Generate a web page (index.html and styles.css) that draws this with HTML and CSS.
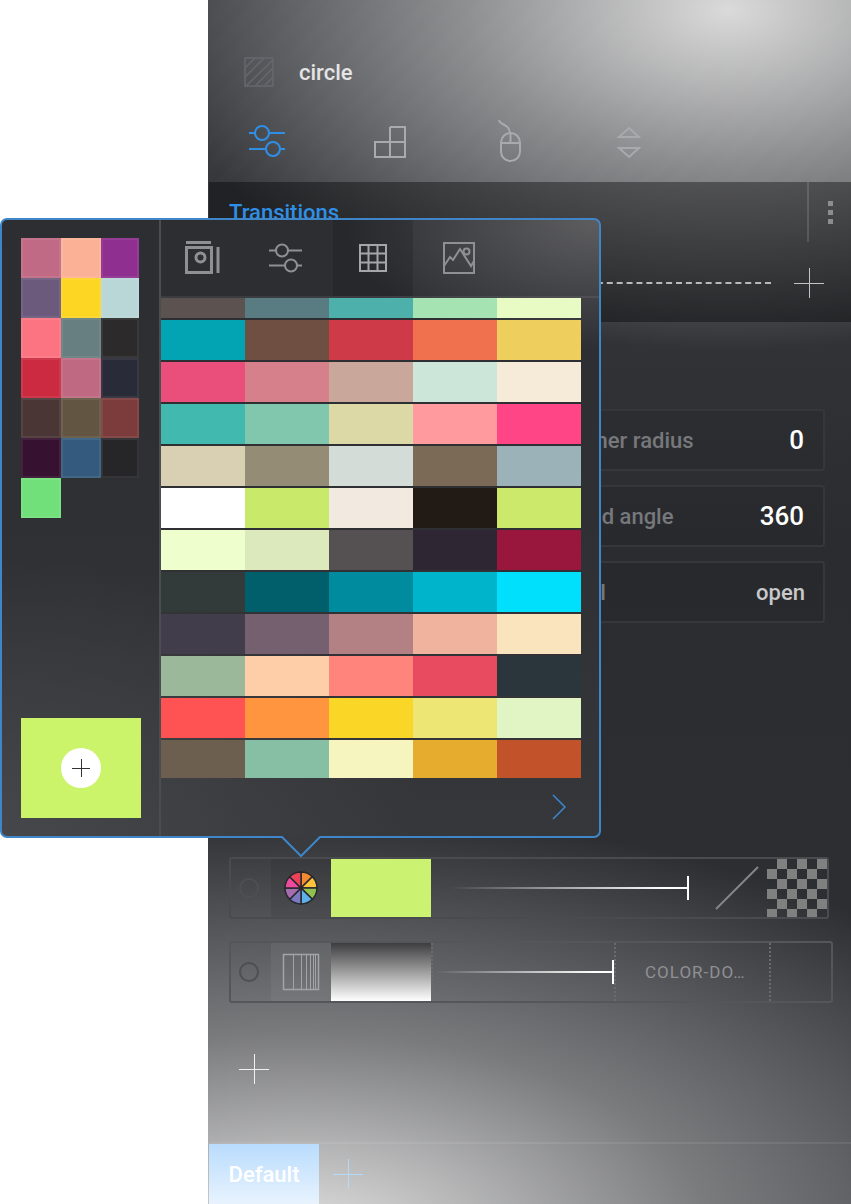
FILE: index.html
```html
<!DOCTYPE html>
<html lang="en">
<head>
    <meta charset="UTF-8">
    <title>circle</title>
    <link rel="stylesheet" href="styles.css">
</head>
<body>
<div class="page">
    <div class="panel">
        <div class="header">
            <div class="title">
                <svg class="title-icon" width="30" height="30" viewBox="0 0 30 30" fill="none" stroke="#666870" stroke-width="1.5">
                    <rect x="1" y="1" width="28" height="28"/>
                    <path d="M1 11L11 1M1 20L20 1M3 28L29 3M12 28L29 11M21 28L29 20"/>
                </svg>
                <span>circle</span>
            </div>
            <div class="tabs">
                <svg width="36" height="40" viewBox="0 0 36 40" fill="none" stroke="#2f8fe6" stroke-width="2">
                    <path d="M0 13H6M20 13H36M0 29H17M31 29H36"/>
                    <circle cx="13" cy="13" r="7"/>
                    <circle cx="24" cy="29" r="7"/>
                </svg>
                <svg width="32" height="40" viewBox="0 0 32 40" fill="none" stroke="#a9aaae" stroke-width="2">
                    <path d="M16 7H31V37H1V22H31M16 7V37"/>
                </svg>
                <svg width="24" height="42" viewBox="0 0 24 42" fill="none" stroke="#a9aaae" stroke-width="2">
                    <path d="M1 0C2 6 11 3 12 13"/>
                    <rect x="3" y="13" width="19" height="28" rx="9.5"/>
                    <path d="M3 23H22M12.5 13V23"/>
                </svg>
                <svg width="26" height="40" viewBox="0 0 26 40" fill="none" stroke="#a9aaae" stroke-width="2">
                    <path d="M13 8L23 17H3ZM3 28H23L13 37Z"/>
                </svg>
            </div>
        </div>
        <div class="band">
            <span class="band-title">Transitions</span>
            <div class="band-menu"><i></i><i></i><i></i></div>
        </div>
        <div class="timeline">
            <div class="timeline-line"></div>
            <svg class="plus" width="30" height="30" viewBox="0 0 30 30" stroke="#c4c4c6"><path d="M0 15.5H30M15.5 0V30"/></svg>
        </div>
        <div class="props">
            <div class="prop"><span class="prop-label">Inner radius</span><span class="prop-value">0</span></div>
            <div class="prop"><span class="prop-label">End angle</span><span class="prop-value">360</span></div>
            <div class="prop"><span class="prop-label">Fill</span><span class="prop-value prop-text">open</span></div>
        </div>
        <div class="layers">
            <div class="layer">
                <div class="radio"></div>
                <div class="layer-icon">
                    <svg width="34" height="34" viewBox="-17 -17 34 34" stroke="#27282c" stroke-width="1.5">
                        <path fill="#f28a30" d="M0 0V-16A16 16 0 0 1 11.3-11.3Z"/>
                        <path fill="#fdc33d" d="M0 0L11.3-11.3A16 16 0 0 1 16 0Z"/>
                        <path fill="#8fc050" d="M0 0H16A16 16 0 0 1 11.3 11.3Z"/>
                        <path fill="#5fb0e8" d="M0 0L11.3 11.3A16 16 0 0 1 0 16Z"/>
                        <path fill="#7b78c0" d="M0 0V16A16 16 0 0 1-11.3 11.3Z"/>
                        <path fill="#a56cb0" d="M0 0L-11.3 11.3A16 16 0 0 1-16 0Z"/>
                        <path fill="#ee4a9d" d="M0 0H-16A16 16 0 0 1-11.3-11.3Z"/>
                        <path fill="#ee4058" d="M0 0L-11.3-11.3A16 16 0 0 1 0-16Z"/>
                    </svg>
                </div>
                <div class="layer-swatch swatch-green"></div>
                <div class="slider slider-long"><div class="slider-line"></div><div class="slider-tick"></div></div>
                <svg class="slash" width="44" height="44" viewBox="0 0 44 44" stroke="#85868a" stroke-width="2"><path d="M1 43L43 1"/></svg>
                <div class="checker"></div>
            </div>
            <div class="layer layer-wide">
                <div class="radio"></div>
                <div class="layer-icon layer-icon-on">
                    <svg width="38" height="38" viewBox="0 0 38 38" fill="none" stroke="#a3a4a8">
                        <rect x="1.5" y="1.5" width="35" height="35" stroke-width="1.5"/>
                        <path d="M11.5 2V36M19.5 2V36M24.5 2V36M28.5 2V36M31.5 2V36M33.5 2V36"/>
                    </svg>
                </div>
                <div class="layer-swatch swatch-fade"></div>
                <div class="slider slider-short"><div class="slider-line"></div><div class="slider-tick"></div></div>
                <div class="blend"><span>COLOR-DO…</span></div>
                <div class="blend-end"></div>
            </div>
        </div>
        <svg class="add-layer" width="30" height="30" viewBox="0 0 30 30" stroke="#f0f0f0"><path d="M0 15.5H30M15.5 0V30"/></svg>
        <div class="footer">
            <div class="footer-tab">Default</div>
            <svg class="footer-plus" width="30" height="30" viewBox="0 0 30 30" stroke="#b5d9fb"><path d="M0 15.5H30M15.5 0V30"/></svg>
        </div>
    </div>

    <!-- colour picker, sits over the panel -->
    <div class="popup">
        <div class="popup-left">
            <div class="recent">
                <i style="background:#c06a85"></i><i style="background:#fbb195"></i><i style="background:#8f2f8f"></i>
                <i style="background:#6c5a7c"></i><i style="background:#fdd523"></i><i style="background:#bad7d8"></i>
                <i style="background:#fc7482"></i><i style="background:#677f81"></i><i style="background:#2c2a2a"></i>
                <i style="background:#cb2a40"></i><i style="background:#bf6a82"></i><i style="background:#2a2b38"></i>
                <i style="background:#493635"></i><i style="background:#625642"></i><i style="background:#7c3c3c"></i>
                <i style="background:#361230"></i><i style="background:#345b7d"></i><i style="background:#262628"></i>
                <i style="background:#72e07a"></i>
            </div>
            <div class="current">
                <div class="current-add">
                    <svg width="18" height="18" viewBox="0 0 18 18" stroke="#333"><path d="M0 9.5H18M9.5 0V18"/></svg>
                </div>
            </div>
        </div>
        <div class="popup-right">
            <div class="ptabs">
                <div class="ptab ptab-1">
                    <svg width="36" height="36" viewBox="0 0 36 36" fill="none" stroke="#8f9092" stroke-width="3">
                        <path d="M2 2.5H27"/>
                        <rect x="2.5" y="7.5" width="25" height="25"/>
                        <circle cx="16.500" cy="17.500" r="4.500"/>
                        <path d="M34 7V33"/>
                    </svg>
                </div>
                <div class="ptab ptab-2">
                    <svg width="34" height="32" viewBox="0 0 34 32" fill="none" stroke="#8f9092" stroke-width="2">
                        <path d="M0 8.500H7M19 8.500H33M0 23.500H16M28 23.500H33"/>
                        <circle cx="13" cy="8.500" r="6"/>
                        <circle cx="22" cy="23.500" r="6"/>
                    </svg>
                </div>
                <div class="ptab ptab-3">
                    <svg width="28" height="28" viewBox="0 0 28 28" fill="none" stroke="#a5a6a8" stroke-width="2">
                        <path d="M1 1H27V27H1ZM1 9.500H27M1 18.500H27M9.500 1V27M18.500 1V27"/>
                    </svg>
                </div>
                <div class="ptab ptab-4">
                    <svg width="32" height="32" viewBox="0 0 32 32" fill="none" stroke="#8f9092" stroke-width="2">
                        <rect x="1" y="1" width="30" height="30"/>
                        <path d="M1 24L7 15L10 18L17 7L28 24L31 19"/>
                        <circle cx="23.500" cy="9.500" r="3"/>
                    </svg>
                </div>
            </div>
            <div class="palettes">
                <i style="background:#5c5250"></i><i style="background:#597c82"></i><i style="background:#4db0aa"></i><i style="background:#a5e3b3"></i><i style="background:#e8fbc5"></i>
                <i style="background:#02a3b3"></i><i style="background:#6e4f42"></i><i style="background:#ce3a48"></i><i style="background:#f0714e"></i><i style="background:#eecf5e"></i>
                <i style="background:#ea4f7c"></i><i style="background:#d5808a"></i><i style="background:#c9a89b"></i><i style="background:#cce6da"></i><i style="background:#f5ebd8"></i>
                <i style="background:#41b9af"></i><i style="background:#80c7ad"></i><i style="background:#dcd9a6"></i><i style="background:#ff9a9e"></i><i style="background:#ff4586"></i>
                <i style="background:#d9cfb3"></i><i style="background:#958c76"></i><i style="background:#d4dcd7"></i><i style="background:#7b6a55"></i><i style="background:#9bb2b9"></i>
                <i style="background:#ffffff"></i><i style="background:#c9e96b"></i><i style="background:#f2e9e0"></i><i style="background:#221a14"></i><i style="background:#cce96b"></i>
                <i style="background:#eeffcd"></i><i style="background:#dce9bc"></i><i style="background:#555152"></i><i style="background:#2e2633"></i><i style="background:#99173c"></i>
                <i style="background:#333a3a"></i><i style="background:#005f6b"></i><i style="background:#008c9e"></i><i style="background:#00b4cc"></i><i style="background:#00dffc"></i>
                <i style="background:#413d4a"></i><i style="background:#74606e"></i><i style="background:#b38184"></i><i style="background:#f0b49e"></i><i style="background:#f9e4bd"></i>
                <i style="background:#9cb89a"></i><i style="background:#fecea8"></i><i style="background:#ff847c"></i><i style="background:#e84a5f"></i><i style="background:#2a363b"></i>
                <i style="background:#ff5252"></i><i style="background:#ff953f"></i><i style="background:#fad726"></i><i style="background:#ede574"></i><i style="background:#e1f5c4"></i>
                <i style="background:#6d5f4f"></i><i style="background:#87bfa5"></i><i style="background:#f6f5c0"></i><i style="background:#e5ac2d"></i><i style="background:#c1522a"></i>
            </div>
            <div class="pager">
                <svg width="16" height="26" viewBox="0 0 16 26" fill="none" stroke="#3a86d0" stroke-width="1.5"><path d="M2 1L14 13L2 25"/></svg>
            </div>
        </div>
        <svg class="popup-arrow" width="42" height="22" viewBox="0 0 42 22">
            <path d="M1 0L21 20L41 0" fill="#3a3b3f" stroke="#3f86c9" stroke-width="2"/>
        </svg>
    </div>
</div>
</body>
</html>
```

FILE: styles.css
```css
* {
    box-sizing: border-box;
}

body {
    margin: 0;
    background-color: #ffffff;
    font-family: 'Roboto', sans-serif;
}

.page {
    position: relative;
    width: 851px;
    height: 1204px;
    overflow: hidden;
}

/* main panel */
.panel {
    margin-left: 208px;
    width: 643px;
    height: 1204px;
    display: flex;
    flex-direction: column;
    padding-left: 1px;
    background:
        radial-gradient(ellipse 580px 340px at 520px 10px, rgba(218, 218, 218, 1) 0%, rgba(218, 218, 218, 0.52) 45%, rgba(218, 218, 218, 0) 100%),
        radial-gradient(ellipse 860px 430px at 90px 1240px, rgba(228, 228, 228, 1) 0%, rgba(228, 228, 228, 0.42) 48%, rgba(228, 228, 228, 0) 100%),
        linear-gradient(#3c3e42, #2b2c30 45%, #2f3034);
}

.header {
    height: 182px;
    padding: 57px 0 0 35px;
    background: repeating-linear-gradient(-45deg, rgba(255, 255, 255, 0.006) 0 10px, transparent 10px 20px);
}

.title {
    display: flex;
    align-items: center;
    gap: 25px;
    height: 30px;
    color: #e4e4e4;
    font-size: 22px;
    font-weight: 500;
}

.tabs {
    display: grid;
    grid-template-columns: 125px 124px 118px 26px;
    align-items: start;
    margin-top: 33px;
    padding-left: 5px;
}

.band {
    height: 60px;
    display: flex;
    align-items: center;
    padding-left: 20px;
    background: rgba(0, 0, 0, 0.38);
}

.band-title {
    color: #2f8fe6;
    font-size: 22px;
    font-weight: 500;
}

.band-menu {
    margin-left: auto;
    width: 44px;
    height: 60px;
    display: flex;
    flex-direction: column;
    align-items: center;
    justify-content: center;
    gap: 4px;
    border-left: 2px solid rgba(255, 255, 255, 0.13);
}

.band-menu i {
    width: 5px;
    height: 5px;
    background: #8d8d8f;
}

.timeline {
    height: 80px;
    display: flex;
    align-items: center;
    padding: 2px 27px 0 200px;
    background: rgba(0, 0, 0, 0.38);
}

.timeline-line {
    flex: 1;
    height: 0;
    border-top: 2px dashed #b9b9bb;
}

.timeline .plus {
    margin-left: 23px;
}

/* property rows */
.props {
    margin: 87px 26px 0 20px;
    display: flex;
    flex-direction: column;
    gap: 14px;
}

.prop {
    height: 62px;
    display: flex;
    align-items: center;
    justify-content: space-between;
    padding: 0 19px 0 346px;
    border: 2px solid #36373b;
    border-radius: 3px;
    background: rgba(0, 0, 0, 0.06);
}

.prop-label {
    color: #77787c;
    font-size: 22px;
    font-weight: 500;
}

.prop-value {
    color: #ffffff;
    font-size: 26px;
    font-weight: 500;
}

.prop-text {
    color: #c9c9cb;
    font-size: 22px;
    margin-right: -1px;
}

/* layers */
.layers {
    margin: 234px 0 0 20px;
    display: flex;
    flex-direction: column;
    gap: 22px;
}

.layer {
    position: relative;
    width: 600px;
    height: 62px;
    display: flex;
    align-items: center;
    border: 2px solid #4a4b4f;
    border-radius: 3px;
}

.layer-wide {
    width: 604px;
    border-color: #55565a;
}

.radio {
    width: 20px;
    height: 20px;
    margin: 0 12px 0 8px;
    border: 2px solid #4e4f53;
    border-radius: 50%;
}

.layer-icon {
    width: 60px;
    height: 58px;
    display: flex;
    align-items: center;
    justify-content: center;
    background: rgba(0, 0, 0, 0.07);
}

.layer-icon-on {
    background: rgba(255, 255, 255, 0.05);
}

.layer-swatch {
    width: 100px;
    height: 58px;
}

.swatch-green {
    background: #ccf271;
}

.swatch-fade {
    background: linear-gradient(#3d3d3f, #ffffff);
}

.slider {
    display: flex;
    align-items: center;
}

.slider-long {
    width: 258px;
    padding-left: 19px;
}

.slider-short {
    width: 183px;
    padding-left: 2px;
    border-left: 2px dotted #6a6b6f;
    height: 58px;
}

.slider-line {
    flex: 1;
    height: 2px;
    background: linear-gradient(to right, rgba(255, 255, 255, 0), #ffffff 90%);
}

.slider-tick {
    width: 2px;
    height: 24px;
    background: #ffffff;
}

.slash {
    margin-left: 26px;
}

.checker {
    width: 60px;
    height: 58px;
    margin-left: 8px;
    background: repeating-conic-gradient(#808080 0 25%, transparent 0 50%) 0 0 / 20px 20px;
}

.blend {
    width: 157px;
    height: 58px;
    display: flex;
    align-items: center;
    padding-left: 29px;
    border-left: 2px dotted #6a6b6f;
    border-right: 2px dotted #6a6b6f;
    color: #8f9094;
    font-size: 17px;
    letter-spacing: 1px;
    white-space: nowrap;
}

.add-layer {
    margin: 51px 0 0 30px;
}

.footer {
    margin-top: auto;
    height: 62px;
    display: flex;
    align-items: center;
    border-top: 2px solid rgba(255, 255, 255, 0.08);
}

.footer-tab {
    width: 110px;
    height: 60px;
    display: flex;
    align-items: center;
    justify-content: center;
    color: #ffffff;
    font-size: 22px;
    font-weight: 500;
    background: linear-gradient(#b9dcfd, #e8f3fe);
}

.footer-plus {
    margin-left: 14px;
}

/* colour picker */
.popup {
    position: absolute;
    left: 0;
    top: 218px;
    width: 601px;
    height: 620px;
    display: flex;
    border: 2px solid #3f86c9;
    border-radius: 7px;
    background:
        radial-gradient(ellipse 260px 130px at 100% 0%, rgba(110, 110, 112, 0.75), rgba(110, 110, 112, 0)),
        radial-gradient(ellipse 420px 280px at 0% 100%, rgba(72, 73, 77, 0.9), rgba(72, 73, 77, 0)),
        linear-gradient(#2d2e32, #2f3034 50%, #36373b);
}

.popup-left {
    width: 159px;
    padding: 18px 0 18px 19px;
    display: flex;
    flex-direction: column;
    justify-content: space-between;
    border-right: 2px solid #4c4d51;
}

.recent {
    display: grid;
    grid-template-columns: 40px 40px 38px;
    grid-auto-rows: 40px;
}

.recent i {
    box-shadow: inset 0 0 0 2px rgba(255, 255, 255, 0.07);
}

.current {
    width: 120px;
    height: 100px;
    display: flex;
    align-items: center;
    justify-content: center;
    background: #ccf46b;
}

.current-add {
    width: 40px;
    height: 40px;
    display: flex;
    align-items: center;
    justify-content: center;
    border-radius: 50%;
    background: #ffffff;
}

.popup-right {
    flex: 1;
    display: flex;
    flex-direction: column;
}

.ptabs {
    height: 78px;
    display: flex;
    box-shadow: inset 0 -2px 0 rgba(255, 255, 255, 0.07);
}

.ptab {
    height: 76px;
    display: flex;
    align-items: center;
    justify-content: center;
}

.ptab-1 {
    width: 82px;
}

.ptab-2 {
    width: 90px;
    padding-right: 4px;
}

.ptab-3 {
    width: 80px;
    background: rgba(0, 0, 0, 0.13);
}

.ptab-4 {
    width: 92px;
}

.palettes {
    width: 420px;
    display: grid;
    grid-template-columns: repeat(5, 84px);
    grid-template-rows: 20px repeat(10, 40px) 38px;
    row-gap: 2px;
}

.pager {
    flex: 1;
    display: flex;
    align-items: center;
    justify-content: flex-end;
    padding: 0 32px 0 0;
}

.popup-arrow {
    position: absolute;
    left: 278px;
    top: 616px;
}
```
